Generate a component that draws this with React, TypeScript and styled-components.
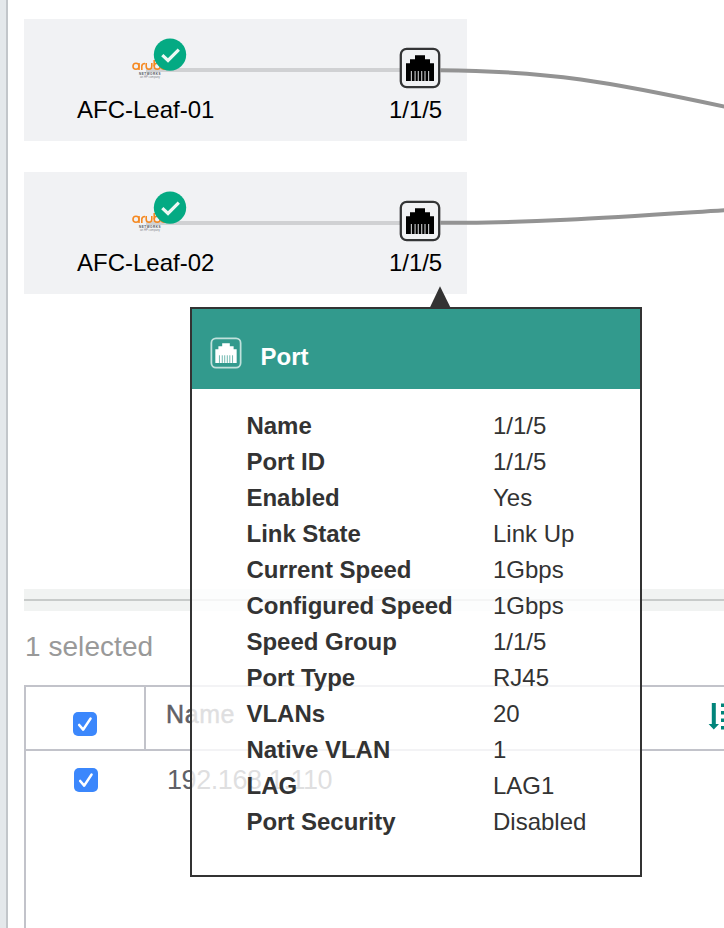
import React from "react";
import styled, { createGlobalStyle } from "styled-components";

const GlobalStyle = createGlobalStyle`
  * { box-sizing: border-box; }
  html, body { margin: 0; padding: 0; background: #fff; }
  body { font-family: "Liberation Sans", Arial, sans-serif; overflow: hidden; }
`;

const Page = styled.div`
  position: relative;
  display: flex;
  width: 724px;
  height: 928px;
  overflow: hidden;
  background: #fff;
`;

const Rail = styled.aside`
  flex: 0 0 8px;
  background: #e4e8eb;
  border-right: 2px solid #c2c6ca;
`;

const Main = styled.main`
  flex: 1;
  min-width: 0;
  display: flex;
  flex-direction: column;
  padding-left: 16px;
`;

const Topology = styled.section`
  height: 589px;
  flex: none;
  padding-top: 19px;
  display: flex;
  flex-direction: column;
  gap: 31px;
`;

const Card = styled.div`
  position: relative;
  width: 443px;
  height: 122px;
  background: #f1f2f4;
  display: flex;
  justify-content: space-between;
  padding: 0 25px 0 53px;
`;

const Wire = styled.div`
  position: absolute;
  left: 122px;
  width: 256px;
  top: 49px;
  height: 4px;
  background: #d0d1d3;
`;

const CardItem = styled.div`
  position: relative;
  display: flex;
  flex-direction: column;
  align-items: flex-start;
  padding-top: 18px;
`;

const Label = styled.span`
  margin-top: 18px;
  font-size: 24px;
  line-height: 28px;
  letter-spacing: 0;
  white-space: nowrap;
  color: #000;
`;

const DeviceArt = styled.svg`
  width: 60px;
  height: 45px;
  flex: none;
  margin-left: 53px;
  margin-bottom: -4px;
  overflow: visible;
`;

const PortArt = styled.svg<{ $size: number }>`
  width: ${(p) => p.$size}px;
  height: ${(p) => p.$size}px;
  flex: none;
`;

const PortCell = styled(CardItem)`
  align-items: flex-end;
  padding-top: 28px;
  ${PortArt} { margin-right: 1px; }
  ${Label} { margin-top: 7px; letter-spacing: -0.1px; }
`;

const Links = styled.svg`
  position: absolute;
  left: 0;
  top: 0;
  width: 724px;
  height: 300px;
  pointer-events: none;
`;

const Splitter = styled.div`
  flex: none;
  height: 22px;
  background: #f1f3f2;
  display: flex;
  align-items: center;
  &::before {
    content: "";
    flex: 1;
    height: 2px;
    background: #c8cbca;
  }
`;

const Selected = styled.div`
  flex: none;
  height: 74px;
  padding: 20px 0 0 1px;
  font-size: 28px;
  line-height: 31px;
  letter-spacing: 0.05px;
  color: #999;
`;

const Table = styled.div`
  flex: 1;
  border: solid #c2c3ca;
  border-width: 2px 0 0 2px;
`;

const Row = styled.div<{ $header?: boolean }>`
  display: flex;
  height: ${(p) => (p.$header ? 64 : 80)}px;
  border-bottom: ${(p) => (p.$header ? "2px solid #c2c3ca" : "0")};
`;

const CheckCell = styled.div<{ $header?: boolean }>`
  width: 120px;
  flex: none;
  padding: ${(p) => (p.$header ? "25px 0 0 47px" : "17px 0 0 48px")};
  border-right: 2px solid ${(p) => (p.$header ? "#c2c3ca" : "transparent")};
`;

const Checkbox = styled.span`
  display: block;
  width: 24px;
  height: 24px;
  border-radius: 5px;
  background: #3b87fc;
  svg { display: block; }
`;

const NameCell = styled.div<{ $header?: boolean }>`
  flex: 1;
  display: flex;
  justify-content: space-between;
  padding: ${(p) => (p.$header ? "12px 0 0 20px" : "14px 0 0 21px")};
  font-size: ${(p) => (p.$header ? 25 : 27)}px;
  line-height: 31px;
  letter-spacing: ${(p) => (p.$header ? 0.6 : -0.42)}px;
  color: #606066;
  -webkit-text-stroke: ${(p) => (p.$header ? "0.5px #606066" : "0")};
`;

const SortIcon = styled.svg`
  width: 16px;
  height: 30px;
  margin-top: 3px;
`;

const Tooltip = styled.div`
  position: absolute;
  left: 190px;
  top: 307px;
  width: 452px;
  height: 570px;
  border: 2px solid #333;
  background: rgba(255, 255, 255, 0.8);
  color: #333;
`;

const Pointer = styled.svg`
  position: absolute;
  left: 237px;
  top: -23px;
  width: 24px;
  height: 23px;
`;

const TipHeader = styled.header`
  height: 80px;
  display: flex;
  align-items: center;
  gap: 18px;
  padding: 8px 0 0 18px;
  background: #329a8d;
  color: #fff;
  font-size: 24px;
  font-weight: 700;
  span { margin: 8px 0 0 0.5px; }
`;

const Details = styled.dl`
  margin: 0;
  padding: 19px 0 0 54.5px;
  display: grid;
  grid-template-columns: 246.5px 1fr;
  grid-auto-rows: 36px;
  font-size: 24px;
  line-height: 36px;
  white-space: nowrap;
  dt { font-weight: 700; letter-spacing: -0.03px; }
  dd { margin: 0; letter-spacing: 0; }
`;

function PortIcon({ size, inverse }: { size: number; inverse?: boolean }) {
  const ink = inverse ? "#fff" : "#000";
  const frame = inverse ? "#c0e1dc" : "#343536";
  const fill = inverse ? "#329a8d" : "#f1f2f4";
  return (
    <PortArt $size={size} viewBox="0 0 42 42">
      <rect x="1.8" y="1.8" width="38.4" height="38.4" rx="6" fill={fill} stroke={frame} strokeWidth="2.3" />
      <path d="M7 34V16.2h4v-4h5V8.3h10v3.9h5v4h4V34Z" fill={ink} />
      <path d="M12.4 24v10M16.1 24v10M19.3 24v10M22.7 24v10M26 24v10M29.6 24v10" stroke={inverse ? "#5aaea3" : "#c3c4c6"} strokeWidth="1.15" />
    </PortArt>
  );
}

const LogoText = styled.text`
  font-family: "Liberation Sans", Arial, sans-serif;
`;

function DeviceIcon() {
  return (
    <DeviceArt viewBox="130 36 60 45">
      <g fill="none" stroke="#f58a23" strokeWidth="1.6">
        <circle cx="136" cy="65.3" r="3" />
        <path d="M139 62v7M141.8 69v-3.7q0-2.8 3.2-2.8M146.2 62v3.3q0 3 2.8 3t2.8-3V62M154.2 59v6.3" />
        <circle cx="157.2" cy="65.3" r="3" />
        <circle cx="164" cy="65.3" r="3" />
      </g>
      <LogoText x="139" y="73.7" fontSize="3" fontWeight="700" textLength="21.5" fill="#53565a">NETWORKS</LogoText>
      <LogoText x="140" y="77.2" fontSize="2.8" textLength="20" fill="#85888b">an HP company</LogoText>
      <circle cx="170" cy="53.6" r="16.2" fill="#04aa83" />
      <path d="m162.3 54.2 5.7 5.3 10.8-10.8" fill="none" stroke="#eef8f4" strokeWidth="3.2" />
    </DeviceArt>
  );
}

function Check() {
  return (
    <Checkbox role="checkbox" aria-checked="true">
      <svg width="24" height="24" viewBox="0 0 24 24">
        <path d="m6.2 13 4 4.6 7.3-11" fill="none" stroke="#fff" strokeWidth="2.6" strokeLinecap="round" strokeLinejoin="round" />
      </svg>
    </Checkbox>
  );
}

const devices = [
  { name: "AFC-Leaf-01", port: "1/1/5" },
  { name: "AFC-Leaf-02", port: "1/1/5" },
];

const details = [
  ["Name", "1/1/5"],
  ["Port ID", "1/1/5"],
  ["Enabled", "Yes"],
  ["Link State", "Link Up"],
  ["Current Speed", "1Gbps"],
  ["Configured Speed", "1Gbps"],
  ["Speed Group", "1/1/5"],
  ["Port Type", "RJ45"],
  ["VLANs", "20"],
  ["Native VLAN", "1"],
  ["LAG", "LAG1"],
  ["Port Security", "Disabled"],
];

export default function App() {
  return (
    <Page>
      <GlobalStyle />
      <Rail />
      <Main>
        <Topology>
          {devices.map((d) => (
            <Card key={d.name}>
              <Wire />
              <CardItem>
                <DeviceIcon />
                <Label>{d.name}</Label>
              </CardItem>
              <PortCell>
                <PortIcon size={42} />
                <Label>{d.port}</Label>
              </PortCell>
            </Card>
          ))}
        </Topology>
        <Splitter />
        <Selected>1 selected</Selected>
        <Table>
          <Row $header>
            <CheckCell $header><Check /></CheckCell>
            <NameCell $header>
              <span>Name</span>
              <SortIcon viewBox="0 0 16 30">
                <path d="M3.8 1h4v21H11l-5.2 5.5L.6 22h3.2Z" fill="#01847a" />
                <path d="M13 3.3h3M13 10.8h3M13 18.2h3M13 25.7h3" stroke="#01847a" strokeWidth="3.6" />
              </SortIcon>
            </NameCell>
          </Row>
          <Row>
            <CheckCell><Check /></CheckCell>
            <NameCell>192.168.1.110</NameCell>
          </Row>
        </Table>
      </Main>
      <Links viewBox="0 0 724 300">
        <g fill="none" stroke="#939393" strokeWidth="4">
          <path d="M440 70.3C550 71 610 82 726 107" />
          <path d="M440 222.8C540 223 620 217 726 210.2" />
        </g>
      </Links>
      <Tooltip>
        <Pointer viewBox="0 0 24 23"><path d="M0.2 23 11 0.2 22.2 23Z" fill="#333" /></Pointer>
        <TipHeader><PortIcon size={32} inverse /><span>Port</span></TipHeader>
        <Details>
          {details.map(([k, v]) => (
            <React.Fragment key={k}><dt>{k}</dt><dd>{v}</dd></React.Fragment>
          ))}
        </Details>
      </Tooltip>
    </Page>
  );
}
